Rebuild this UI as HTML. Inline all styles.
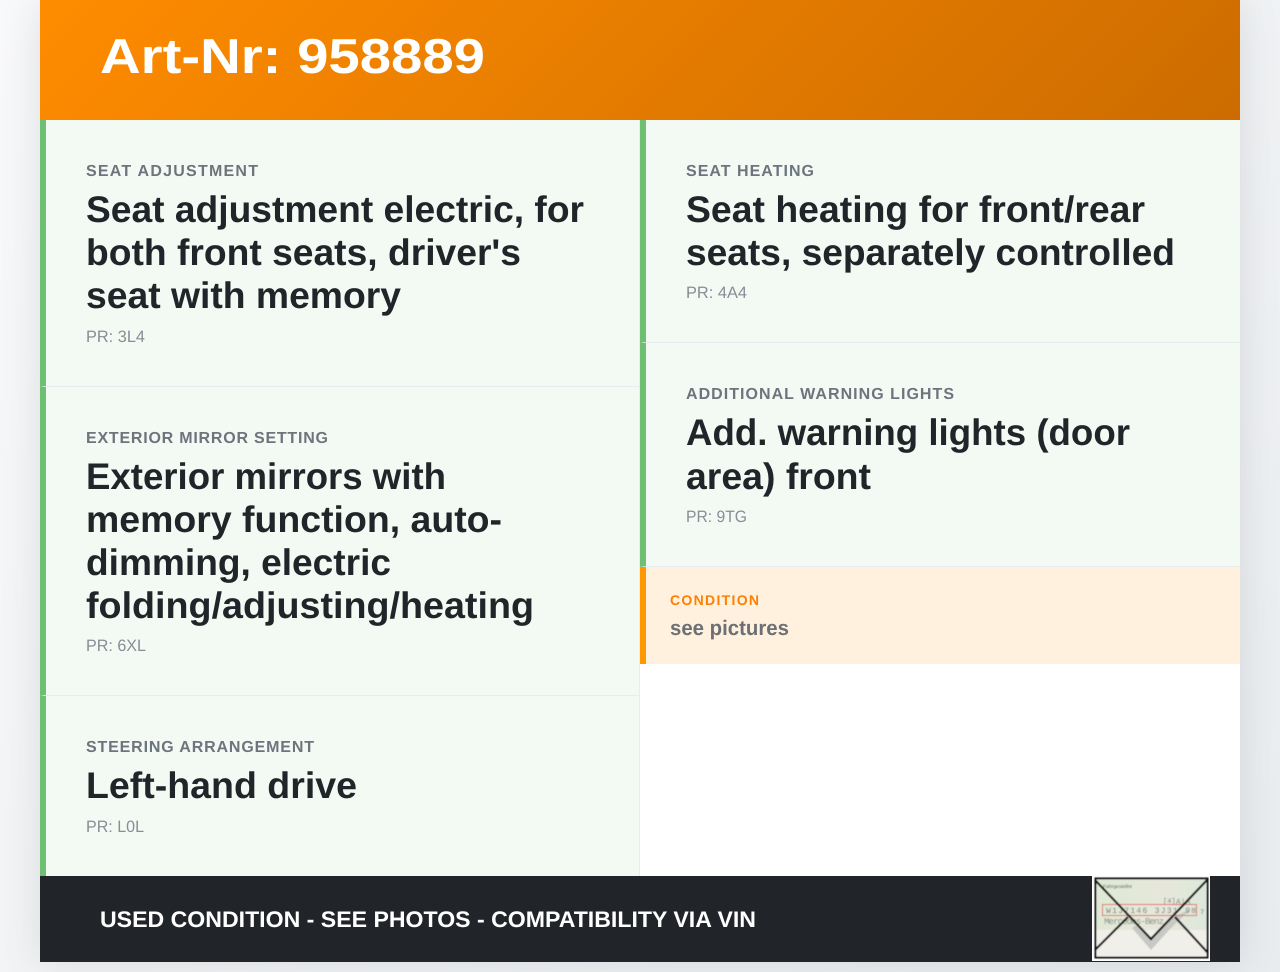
<!DOCTYPE html>
<html lang="en">
<head>
<meta charset="utf-8">
<title>Art-Nr: 958889</title>
<style>
html,body{margin:0;padding:0;width:1280px;height:972px;overflow:hidden}
body{background:linear-gradient(135deg,#f8f9fa 0%,#e9ecef 100%);position:relative;font-family:"Liberation Sans",Arial,sans-serif}
#wrap{position:absolute;left:40px;top:0;width:1200px;height:962px;background:#fff;box-shadow:0 0 40px rgba(0,0,0,.1)}
#head{position:absolute;left:0;top:0;width:1200px;height:120px;background:linear-gradient(135deg,#ff8c00 0%,#cc6c00 100%)}
#foot{position:absolute;left:0;top:876px;width:1200px;height:86px;background:#212529}
.c{position:absolute;box-sizing:border-box;background:#f3faf3;border-left:6px solid #6fbf73;border-bottom:1px solid #e9ecef}
.l{left:0;width:600px;border-right:1px solid #e9ecef}
.r{left:600px;width:600px}
#cond{position:absolute;left:600px;top:567px;width:600px;height:97px;box-sizing:border-box;background:#fff1de;border-left:6px solid #ff9800}
svg{position:absolute;left:0;top:0}
.t{font-weight:700;font-size:37px;fill:#212529}
.b{font-weight:700;font-size:16px;fill:#6c757d}
.p{font-size:16.5px;fill:#868e96}
</style>
</head>
<body>
<div id="wrap">
  <div id="head"></div>
  <div class="c l" style="top:120px;height:267px"></div>
  <div class="c l" style="top:387px;height:309px"></div>
  <div class="c l" style="top:696px;height:180px;border-bottom:0"></div>
  <div class="c r" style="top:120px;height:223px"></div>
  <div class="c r" style="top:343px;height:224px"></div>
  <div id="cond"></div>
  <div id="foot"></div>
</div>
<svg width="1280" height="972" viewBox="0 0 1280 972" font-family="'Liberation Sans',Arial,sans-serif" text-rendering="geometricPrecision">
  <defs>
    <filter id="bl" x="-5%" y="-5%" width="110%" height="110%"><feGaussianBlur stdDeviation="0.45"/></filter>
    <linearGradient id="gr" x1="0" y1="0" x2="1" y2="0"><stop offset="0" stop-color="#dfe9d6"/><stop offset=".6" stop-color="#e6e7da"/><stop offset="1" stop-color="#dde8da"/></linearGradient>
  </defs>
  <text x="100" y="73" font-size="49" font-weight="700" fill="#fff" textLength="385" lengthAdjust="spacingAndGlyphs">Art-Nr: 958889</text>

  <text class="b" x="86" y="176" textLength="172" lengthAdjust="spacing">SEAT ADJUSTMENT</text>
  <text class="t" x="86" y="222" textLength="498" lengthAdjust="spacingAndGlyphs">Seat adjustment electric, for</text>
  <text class="t" x="86" y="265" textLength="435" lengthAdjust="spacingAndGlyphs">both front seats, driver's</text>
  <text class="t" x="86" y="308" textLength="315" lengthAdjust="spacingAndGlyphs">seat with memory</text>
  <text class="p" x="86" y="342" textLength="59" lengthAdjust="spacingAndGlyphs">PR: 3L4</text>

  <text class="b" x="86" y="443" textLength="242" lengthAdjust="spacing">EXTERIOR MIRROR SETTING</text>
  <text class="t" x="86" y="489" textLength="360" lengthAdjust="spacingAndGlyphs">Exterior mirrors with</text>
  <text class="t" x="86" y="532" textLength="416" lengthAdjust="spacingAndGlyphs">memory function, auto-</text>
  <text class="t" x="86" y="575" textLength="305" lengthAdjust="spacingAndGlyphs">dimming, electric</text>
  <text class="t" x="86" y="618" textLength="448" lengthAdjust="spacingAndGlyphs">folding/adjusting/heating</text>
  <text class="p" x="86" y="651" textLength="60" lengthAdjust="spacingAndGlyphs">PR: 6XL</text>

  <text class="b" x="86" y="752" textLength="228" lengthAdjust="spacing">STEERING ARRANGEMENT</text>
  <text class="t" x="86" y="798" textLength="271" lengthAdjust="spacingAndGlyphs">Left-hand drive</text>
  <text class="p" x="86" y="832" textLength="58" lengthAdjust="spacingAndGlyphs">PR: L0L</text>

  <text class="b" x="686" y="176" textLength="128" lengthAdjust="spacing">SEAT HEATING</text>
  <text class="t" x="686" y="222" textLength="459" lengthAdjust="spacingAndGlyphs">Seat heating for front/rear</text>
  <text class="t" x="686" y="265" textLength="489" lengthAdjust="spacingAndGlyphs">seats, separately controlled</text>
  <text class="p" x="686" y="298" textLength="61" lengthAdjust="spacingAndGlyphs">PR: 4A4</text>

  <text class="b" x="686" y="399" textLength="268" lengthAdjust="spacing">ADDITIONAL WARNING LIGHTS</text>
  <text class="t" x="686" y="445" textLength="444" lengthAdjust="spacingAndGlyphs">Add. warning lights (door</text>
  <text class="t" x="686" y="489" textLength="185" lengthAdjust="spacingAndGlyphs">area) front</text>
  <text class="p" x="686" y="522" textLength="61" lengthAdjust="spacingAndGlyphs">PR: 9TG</text>

  <text x="670" y="605" font-size="14" font-weight="700" fill="#ff7f00" textLength="89" lengthAdjust="spacing">CONDITION</text>
  <text x="670" y="635" font-size="21" font-weight="700" fill="#6c7075" textLength="119" lengthAdjust="spacingAndGlyphs">see pictures</text>

  <text x="100" y="927" font-size="22.5" font-weight="700" fill="#fff" textLength="656" lengthAdjust="spacingAndGlyphs">USED CONDITION - SEE PHOTOS - COMPATIBILITY VIA VIN</text>

  <rect x="1092" y="876" width="118" height="85" fill="#fff"/>
  <g filter="url(#bl)">
    <rect x="1095" y="878" width="113" height="80" fill="#f1efe9"/>
    <rect x="1096" y="879" width="111" height="51" fill="url(#gr)"/>
    <path d="M1132 928L1151 950L1170 929L1192 908L1172 918L1151 940L1137 924Z" fill="#c8c8c4"/>
    <text x="1103" y="888" font-size="5" fill="#555">Fahrgestellnr</text>
    <text x="1163" y="903" font-size="7" font-family="'Liberation Mono',monospace" fill="#777">[4]</text>
    <text x="1176" y="904" font-size="8" font-family="'Liberation Mono',monospace" fill="#8a8a8a">A|A</text>
    <text x="1106" y="913" font-size="8" font-family="'Liberation Mono',monospace" fill="#777" textLength="90" lengthAdjust="spacing">W1J7146 3J31 98</text>
    <text x="1200" y="914" font-size="7" font-family="'Liberation Mono',monospace" fill="#777">7</text>
    <text x="1104" y="924" font-size="9" font-family="'Liberation Mono',monospace" fill="#8c8c88" textLength="60" lengthAdjust="spacing">Mercedes-Benz</text>
    <rect x="1102.5" y="904.5" width="94" height="11" fill="none" stroke="#e0685c" stroke-width="1"/>
    <rect x="1095.5" y="878.5" width="112" height="79" fill="none" stroke="#111" stroke-width="2"/>
    <path d="M1095 880L1151 939L1208 879M1095 950L1128 917M1208 953L1175 917" fill="none" stroke="#0c0c0c" stroke-width="2.2"/>
  </g>
</svg>
</body>
</html>
